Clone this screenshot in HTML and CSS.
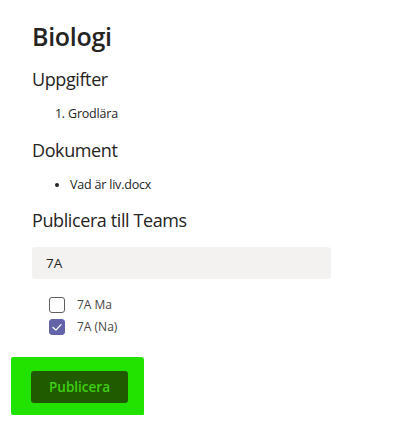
FILE: index.html
```html
<!DOCTYPE html>
<html lang="sv">
<head>
<meta charset="utf-8">
<title>Biologi</title>
<link rel="stylesheet" href="styles.css">
</head>
<body>
<main class="panel">
  <h1 class="title">Biologi</h1>
  <h2 class="section">Uppgifter</h2>
  <ol class="list list-num"><li>Grodlära</li></ol>
  <h2 class="section">Dokument</h2>
  <ul class="list list-dot"><li>Vad är liv.docx</li></ul>
  <h2 class="section">Publicera till Teams</h2>
  <div class="search">7A</div>
  <div class="checks">
    <label class="check"><span class="box"></span><span class="check-label">7A Ma</span></label>
    <label class="check"><span class="box box-on"><svg viewBox="0 0 16 16" width="16" height="16"><path d="M4 8.4 L6.9 11.1 L12 5.6" fill="none" stroke="#fff" stroke-width="1.3" stroke-linecap="round" stroke-linejoin="round"/></svg></span><span class="check-label">7A (Na)</span></label>
  </div>
  <div class="marker">
    <button class="publish" type="button">Publicera</button>
  </div>
</main>
</body>
</html>
```
FILE: styles.css
```css
html, body {
  margin: 0;
  padding: 0;
  background: #ffffff;
}
body {
  font-family: "Open Sans", "Noto Sans", sans-serif;
  color: #252423;
}
.panel {
  padding: 20px 32px 0 32px;
  display: flex;
  flex-direction: column;
  align-items: flex-start;
}
.title {
  margin: 0;
  font-size: 25px;
  line-height: 32px;
  font-weight: 600;
  letter-spacing: -0.3px;
}
.section {
  margin: 15px 0 0 0;
  font-size: 18px;
  line-height: 24px;
  font-weight: 400;
  letter-spacing: -0.4px;
}
.list {
  margin: 13px 0 0 0;
  font-size: 12.5px;
  line-height: 20px;
  letter-spacing: -0.2px;
}
.list + .section { margin-top: 14px; }
.list-num { padding-left: 36px; }
.list-dot { padding-left: 38px; }
.list-dot + .section { margin-top: 13px; }
.search {
  margin-top: 15px;
  box-sizing: border-box;
  width: 299px;
  height: 32px;
  padding-left: 14px;
  background: #f3f2f1;
  border-radius: 3px;
  font-size: 13.5px;
  line-height: 32px;
}
.checks {
  margin: 18px 0 0 17px;
  display: flex;
  flex-direction: column;
  gap: 6px;
}
.check {
  display: flex;
  align-items: center;
  gap: 12px;
  font-size: 12px;
  line-height: 16px;
  color: #484644;
}
.box {
  box-sizing: border-box;
  width: 16px;
  height: 16px;
  border: 1px solid #605e5c;
  border-radius: 3px;
  display: flex;
}
.box-on {
  background: #6264a7;
  border-color: #6264a7;
}
.box-on svg { margin: -1px; }
.marker {
  margin: 22px 0 0 -21px;
  padding: 14px 16px 12px 20px;
  background: #22e300;
  border-radius: 2px 3px 1px 2px;
}
.publish {
  display: block;
  width: 97px;
  height: 32px;
  border: none;
  border-radius: 3px;
  background: #215b00;
  color: #3fd011;
  font-family: "Open Sans", "Noto Sans", sans-serif;
  font-size: 13.5px;
  font-weight: 600;
  padding: 0;
}
```
